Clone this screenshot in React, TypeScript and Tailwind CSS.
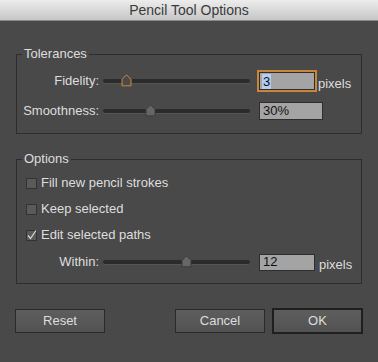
import React from "react";

function Thumb({ left, focus }: { left: number; focus?: boolean }) {
  return (
    <svg
      width="11"
      height="13"
      viewBox="0 0 11 13"
      className="absolute top-1/2 -translate-y-[55%]"
      style={{ left }}
    >
      <path
        d="M1 5.5 L5.5 1 L10 5.5 L10 12 L1 12 Z"
        fill={focus ? "#4a4a4a" : "#666666"}
        stroke={focus ? "#d38b3e" : "#3a3a3a"}
        strokeWidth="1"
      />
    </svg>
  );
}

function Track({ thumb, focus }: { thumb: number; focus?: boolean }) {
  return (
    <div className="relative ml-[4px] h-[4px] w-[147px] rounded-[2px] bg-[#2b2b2b] shadow-[0_1px_0_#555]">
      <Thumb left={thumb} focus={focus} />
    </div>
  );
}

function Checkbox({ checked, label }: { checked?: boolean; label: string }) {
  return (
    <div className="flex h-[20px] items-center pl-[9px]">
      <div className="relative h-[11px] w-[11px] border border-[#333] bg-[#5a5a5a]">
        {checked && (
          <svg width="12" height="12" viewBox="0 0 12 12" className="absolute -left-[1px] -top-[2px]">
            <path d="M2 6.5 L4.5 9.5 L10 1.5" fill="none" stroke="#d8d8d8" strokeWidth="1.2" />
          </svg>
        )}
      </div>
      <span className="ml-[4px] text-[13px] text-[#dedede]">{label}</span>
    </div>
  );
}

export default function App() {
  return (
    <div
      className="flex h-[362px] w-[378px] flex-col bg-[#494949]"
      style={{ fontFamily: '"Liberation Sans", Arial, sans-serif' }}
    >
      <div className="flex h-[21px] items-center justify-center border-b border-[#8a8a8a] bg-gradient-to-b from-[#ededed] to-[#c6c6c6] text-[14px] text-[#3a3a3a]">
        Pencil Tool Options
      </div>

      <fieldset className="mx-[16px] mt-[25px] border border-[#2d2d2d] px-0 pb-[12px] pt-[9px]">
        <legend className="ml-[5px] px-[2px] text-[13px] leading-[16px] text-[#dedede]">Tolerances</legend>
        <div className="flex h-[20px] items-center">
          <span className="w-[82px] text-right text-[13px] text-[#dedede]">Fidelity:</span>
          <Track thumb={18} focus />
          <div className="ml-[9px] flex h-[18px] w-[56px] items-center border border-[#2e2e2e] bg-[#a4a4a4] pl-[2px] text-[13px] text-[#111] outline-2 outline-offset-0 outline-[#c98638]">
            <span className="bg-[#b3cdf3] px-[1px] leading-[15px]">3</span>
          </div>
          <span className="ml-[3px] mt-[6px] text-[13px] text-[#dedede]">pixels</span>
        </div>
        <div className="mt-[10px] flex h-[20px] items-center">
          <span className="w-[82px] text-right text-[13px] text-[#dedede]">Smoothness:</span>
          <Track thumb={42} />
          <div className="ml-[9px] flex h-[18px] w-[64px] items-center border border-[#2e2e2e] bg-[#a4a4a4] pl-[3px] text-[13px] text-[#111]">
            30%
          </div>
        </div>
      </fieldset>

      <fieldset className="mx-[16px] mt-[17px] border border-[#2d2d2d] px-0 pb-[11px] pt-[6px]">
        <legend className="ml-[5px] px-[2px] text-[13px] leading-[16px] text-[#dedede]">Options</legend>
        <Checkbox label="Fill new pencil strokes" />
        <div className="mt-[6px]">
          <Checkbox label="Keep selected" />
        </div>
        <div className="mt-[6px]">
          <Checkbox checked label="Edit selected paths" />
        </div>
        <div className="mt-[7px] flex h-[20px] items-center">
          <span className="w-[82px] text-right text-[13px] text-[#dedede]">Within:</span>
          <Track thumb={78} />
          <div className="ml-[9px] flex h-[17px] w-[56px] items-center border border-[#2e2e2e] bg-[#a4a4a4] pl-[3px] text-[13px] text-[#111]">
            12
          </div>
          <span className="ml-[4px] mt-[6px] text-[13px] text-[#dedede]">pixels</span>
        </div>
      </fieldset>

      <div className="mt-[24px] flex items-center">
        <button className="ml-[15px] h-[24px] w-[90px] border border-[#2a2a2a] bg-gradient-to-b from-[#5e5e5e] to-[#525252] text-[13px] text-[#dedede]">
          Reset
        </button>
        <button className="ml-[70px] h-[24px] w-[90px] border border-[#2a2a2a] bg-gradient-to-b from-[#5e5e5e] to-[#525252] text-[13px] text-[#dedede]">
          Cancel
        </button>
        <button className="ml-[7px] h-[26px] w-[91px] border-2 border-[#1f1f1f] bg-gradient-to-b from-[#5e5e5e] to-[#525252] text-[13px] text-[#dedede]">
          OK
        </button>
      </div>
    </div>
  );
}
